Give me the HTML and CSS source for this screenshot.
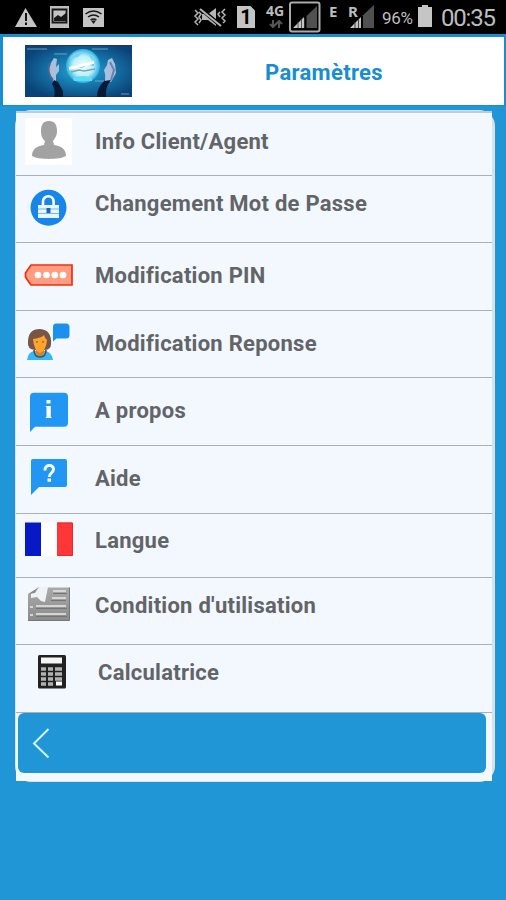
FILE: index.html
```html
<!DOCTYPE html>
<html lang="fr">
<head>
<meta charset="utf-8">
<title>Paramètres</title>
<link rel="stylesheet" href="styles.css">
</head>
<body>
<div class="status">
  <svg class="status-left" width="120" height="34" viewBox="0 0 120 34">
    <path d="M25.500 8L37 27H15z" fill="#c4c4c4"/><path d="M26 13v8M26 22.500v2.500" stroke="#111" stroke-width="2"/>
    <path d="M50 6h19v22H50z" fill="#bdbdbd"/><path d="M52.500 9.500h14v13h-14z" fill="#c4c4c4" stroke="#171717" stroke-width="1.800"/><path d="M54 21v-3l4-3 3 2 5-4v8z" fill="#171717"/>
    <path d="M83 8h21v19H83z" fill="#c4c4c4"/><path d="M85.500 14q8-6 16 0M88 17q5.500-4 11 0M90.500 20q3-2 6 0" fill="none" stroke="#171717" stroke-width="1.500"/><path d="M91 20.500h5L93.500 24z" fill="#171717"/>
  </svg>
  <svg class="mute" width="34" height="34" viewBox="193 0 34 34" fill="none" stroke="#b5b5b5" stroke-width="1.500">
    <path d="M202 14h6l8-6v18l-8-6h-6z" fill="#b5b5b5" stroke="none"/><path d="M201 9l20 17" stroke="#000" stroke-width="4"/><path d="M200 9l21 17" stroke-width="2"/>
    <path d="M195 10l3 3-3 3 3 3-3 3 3 3M199 12l2 2-2 3 2 3-2 3M225 9l-3 3 3 3-3 3 3 3-2 2M220 12l-2 2 2 3"/>
  </svg>
  <div class="sim">1</div>
  <div class="net"><span>4G</span><svg width="14" height="9" viewBox="0 0 14 9"><path d="M4 0v7M1 4l3 3 3-3M10 8V1M7 4l3-3 3 3" fill="none" stroke="#555" stroke-width="2"/></svg></div>
  <svg class="signal" width="32" height="34" viewBox="289 0 32 34"><rect x="290" y="2.500" width="29.500" height="29" rx="2" fill="none" stroke="#aaa" stroke-width="2"/><path d="M294 28l23-22v22z" fill="#505050"/><path d="M293 28l11-11v11z" fill="#c4c4c4"/><path d="M298 22v6M301.500 19v9" stroke="#555"/><path d="M305.500 16v12" stroke="#000" stroke-width="2"/></svg>
  <span class="edge">E</span>
  <span class="roam">R</span>
  <svg class="signal-roam" width="26" height="34" viewBox="349 0 26 34"><path d="M361 17l13-12v23h-13z" fill="#505050"/><path d="M350 28l11-11v11z" fill="#c4c4c4"/><path d="M355 22v6M358.500 19v9" stroke="#444"/><path d="M362 16v12" stroke="#000" stroke-width="2"/></svg>
  <span class="percent">96%</span>
  <svg class="battery" width="16" height="34" viewBox="0 0 16 34"><path d="M1 7h4V5h6v2h4v20H1z" fill="#c5c5c5"/></svg>
  <span class="time">00:35</span>
</div>
<header class="header">
  <svg class="logo" width="107" height="52" viewBox="0 0 107 52">
    <defs>
      <radialGradient id="sky" cx=".53" cy=".5" r=".58"><stop offset="0" stop-color="#29a9dd"/><stop offset=".45" stop-color="#1679ae"/><stop offset="1" stop-color="#0a4377"/></radialGradient>
      <radialGradient id="globe"><stop offset="0" stop-color="#f2ffff"/><stop offset=".6" stop-color="#b8f1fc"/><stop offset="1" stop-color="#29aee0"/></radialGradient>
    </defs>
    <path d="M0 0h107v52H0z" fill="url(#sky)"/><path d="M0 .5h107M0 51.500h107" stroke="#173a72"/>
    <circle cx="58" cy="21" r="17" fill="url(#globe)"/>
    <path d="M44 14q5-9 14-7l-5 5-5 1zM64 9q6 1 8 7l-6-2z" fill="#7bd3ec"/>
    <path d="M45 24l7-3 5 1 6-3 6 1M46 27l8-2 5 1 11-2" fill="none" stroke="#7da3ba" stroke-width="1.300"/>
    <path d="M44 22l25-6v3l-25 6z" fill="#fff"/>
    <path d="M48 33q10-4 19 0v3H49z" fill="#5bdcf4"/>
    <path d="M28 36q-6-8-4-15l5-8 3 1-1 8 3-3v7l-3 4v7z" fill="#a9bfdc"/><path d="M28 35q-7-8-3-17" stroke="#4b6590" stroke-width="2" fill="none"/>
    <path d="M29 35l4 2 5 9v6h-9q2-7-2-13z" fill="#071b38"/>
    <path d="M80 36q1-6-1-11l3-5 1-5 4-2 3 6 1 9-5 9z" fill="#a9bfdc"/><path d="M85 17l4 8-3 10" stroke="#6d81a9" stroke-width="2" fill="none"/>
    <path d="M79 36l7-1q-6 7-5 17h-9q0-9 7-16z" fill="#071b38"/>
    <path d="M2 4h20M29 9h13M67 4h16M70 36h9M96 49h8" stroke="#82b5d1" stroke-width=".8"/>
  </svg>
  <h1 class="title">Paramètres</h1>
</header>
<main class="panel">
  <div class="row r1"><svg class="icon" width="60" height="62" viewBox="16 113 60 62"><path d="M25 117h47v47H25z" fill="#fff"/><path d="M49 120c6 0 8 4 8 10 0 5-2 7-4 10l1 4c7 1 12 4 12 11-7 4-13 2-17 3-4-1-10 1-17-3 0-7 5-10 12-11l1-4c-3-3-4-5-4-10 0-6 2-10 8-10z" fill="#a2a2a2"/></svg><span class="label">Info Client/Agent</span></div>
  <div class="row r2"><svg class="icon" width="60" height="66" viewBox="16 176 60 66"><circle cx="48.500" cy="207.700" r="18" fill="#1686eb"/><path d="M43 205v-3.500a5.300 5.300 0 0 1 10.600 0v3.500" fill="none" stroke="#fff" stroke-width="2.600"/><path d="M38 205h21v13H38z" fill="#eaf6ff"/><path d="M38 209h21M38 213.500h21" stroke="#77b7ed"/><path d="M46.500 208h4v5h-4z" fill="#1669af"/></svg><span class="label">Changement Mot de Passe</span></div>
  <div class="row r3"><svg class="icon" width="60" height="67" viewBox="16 243 60 67"><path d="M31 265h41v20H31q-3-4-5.500-8v-4z" fill="#ff9d80" stroke="#f52d0d" stroke-width="1.700"/><g fill="#fff"><circle cx="38" cy="275" r="3.300"/><circle cx="46.500" cy="275" r="3.300"/><circle cx="54.800" cy="275" r="3.300"/><circle cx="63" cy="275" r="3.300"/></g></svg><span class="label">Modification PIN</span></div>
  <div class="row r4"><svg class="icon" width="60" height="66" viewBox="16 311 60 66"><path d="M27 360q1-8 7-9h12q6 2 7 9z" fill="#39b6f5"/><path d="M35 350q-8-1-7-8 0-13 12-13 12 1 11 15 0 6-7 6z" fill="#795548"/><path d="M36 350v-4h8v4q2 3-4 6-6-3-4-6z" fill="#ed7d09"/><path d="M34 350q0 7 6 7t6-7" fill="none" stroke="#41515b" stroke-width="1.500"/><path d="M33 339q8-1 11-4 1 4 3 5-1 11-7 13-6-2-7-14z" fill="#ffa42c"/><circle cx="37" cy="342" r=".8" fill="#77400e"/><circle cx="43" cy="342" r=".8" fill="#77400e"/><path d="M56 323.500h10q3.500 0 3.500 3.500v8q0 3.500-3.500 3.500h-9.500L53 341.500V327q0-3.500 3-3.500z" fill="#1b91ed"/></svg><span class="label">Modification Reponse</span></div>
  <div class="row r5"><svg class="icon" width="60" height="67" viewBox="16 378 60 67"><path d="M34 392.700h30q4 0 4 4v26q0 4-4 4H35L30 432v-35.300q0-4 4-4z" fill="#2196f3"/><path d="M46.500 400h4v3.500h-4zM46.500 406h4.300v12h-4.300z" fill="#fff"/><path d="M45.800 406.500h4M45.800 417.500h5.700" stroke="#fff"/></svg><span class="label">A propos</span></div>
  <div class="row r6"><svg class="icon" width="60" height="67" viewBox="16 446 60 67"><path d="M33 459h32q2 0 2 2v24q0 2-2 2H39l-8 8v-34q0-2 2-2z" fill="#2196f3"/><path d="M45 470.500c-.5-6.500 8.500-6.500 8.500-1.500 0 4-4.300 4-4.300 8" fill="none" stroke="#fff" stroke-width="2.900"/><path d="M47.500 478.500h3.500v3.200h-3.500z" fill="#fff"/></svg><span class="label">Aide</span></div>
  <div class="row r7"><svg class="icon" width="60" height="63" viewBox="16 514 60 63"><path d="M25 522.500h16V556H25z" fill="#0719c5"/><path d="M41 522.500h16V556H41z" fill="#fff"/><path d="M57 522.500h15.500V556H57z" fill="#fe3637"/><path d="M57 523h15.500v32.500H57" fill="none" stroke="#e52b30"/></svg><span class="label">Langue</span></div>
  <div class="row r8"><svg class="icon" width="60" height="66" viewBox="16 578 60 66"><defs><linearGradient id="paper" x2="0" y2="1"><stop stop-color="#aaa"/><stop offset="1" stop-color="#8b8b8b"/></linearGradient></defs><path d="M38 587.500h31.500v33H28v-26z" fill="url(#paper)"/><path d="M31 594l9-7h8l-3 15-4-1-4-4-6 1z" fill="#eff3f6"/><path d="M28 594l10-6-3 5z" fill="#8d8d8d"/><g fill="none" stroke-width="2" stroke="#d5d5d5"><path d="M53 591h13M52 598h14M36 606h30M36 614h30M30 607h3M30 615h3"/><path d="M53 593.500h14M51 600.500h15M36 608.500h31M36 616.500h31" stroke="#747474" stroke-width="1"/></g><path d="M28 620.500h41.500v-33" fill="none" stroke="#777"/></svg><span class="label">Condition d'utilisation</span></div>
  <div class="row r9"><svg class="icon" width="60" height="67" viewBox="16 645 60 67"><rect x="38" y="655" width="28" height="33.500" rx="1.500" fill="#222"/><path d="M41 657.500h21v6H41z" fill="#f5f5f5"/><path d="M41 669h5M48 669h5M55 669h7M41 674h5M48 674h5M55 674h7M41 679h5M48 679h5M55 679h7M41 684h5M48 684h5" stroke="#b2b2b2" stroke-width="3.400"/><path d="M56 681.500h6v4h-6z" fill="#fff"/></svg><span class="label label-calc">Calculatrice</span></div>
  <button class="back" aria-label="Retour"><svg width="20" height="32" viewBox="0 0 20 32"><path d="M16.500 2L2 16.500 16.500 30.500" fill="none" stroke="#d4f4ff" stroke-width="2"/></svg></button>
</main>
</body>
</html>
```
FILE: styles.css
```css
* { box-sizing: border-box; }
body {
  margin: 0;
  width: 506px;
  height: 900px;
  overflow: hidden;
  background: #2196d6;
  font-family: Roboto, "Liberation Sans", sans-serif;
}
svg { display: block; flex-shrink: 0; }
.status {
  display: flex;
  height: 34px;
  background: #000;
  color: #bdbdbd;
  white-space: nowrap;
}
.mute { margin-left: 73px; }
.sim {
  width: 18px;
  height: 22px;
  margin: 6px 0 0 10px;
  background: #c4c4c4;
  color: #000;
  clip-path: polygon(0 0, 75% 0, 100% 20%, 100% 100%, 0 100%);
  font: bold 20px/22px Roboto, sans-serif;
  text-align: center;
}
.net {
  width: 22px;
  margin: 3px 0 0 11px;
  font: bold 14px/16px "Open Sans", sans-serif;
}
.net svg { margin: 1px 0 0 3px; }
.signal { margin-left: 1px; }
.edge, .roam {
  width: 10px;
  margin: 2px 0 0 8px;
  font: bold 15px/18px "Noto Sans", sans-serif;
}
.roam { margin-left: 9px; }
.signal-roam { margin-left: -9px; }
.percent {
  width: 34px;
  margin: 7px 0 0 7px;
  font-size: 17px;
  line-height: 22px;
  letter-spacing: -.3px;
}
.battery { margin-left: 1px; }
.time {
  margin: 4px 0 0 8px;
  font-size: 24px;
  line-height: 28px;
  letter-spacing: -1.2px;
}
.header {
  display: flex;
  width: 506px;
  height: 72px;
  padding: 9px 0 0 22px;
  background: #fff;
  border: 3px solid #168ed1;
  border-right-width: 2px;
  border-bottom-width: 1px;
}
.logo { margin-top: -1px; }
.title {
  margin: 13px 0 0 133px;
  color: #168ed0;
  font-size: 22px;
  font-weight: 700;
  line-height: 28px;
  letter-spacing: .32px;
}
.panel {
  position: relative;
  width: 476px;
  height: 670px;
  margin: 5px 0 0 16px;
  padding-top: 1px;
  background: #f2f8fe;
  border-top: 2px solid #b9cce1;
}
.panel::before {
  content: "";
  position: absolute;
  z-index: -1;
  inset: -3px -2.500px -1px -1.500px;
  border-radius: 16px;
  background: #d7e2ed;
}
.row {
  display: flex;
  border-bottom: 1px solid #aab0b6;
}
.r1 { height: 62px; }
.r2, .r4, .r8 { height: 67px; }
.r3, .r5, .r6, .r9 { height: 68px; }
.r7 { height: 64px; }
.label {
  margin: 19px 0 0 19px;
  height: 28px;
  color: #626467;
  font-size: 22px;
  font-weight: 700;
  line-height: 28px;
  letter-spacing: .26px;
  white-space: nowrap;
}
.r1 .label { margin-top: 14px; }
.r2 .label, .r8 .label { margin-top: 14px; }
.r7 .label { margin-top: 13px; }
.r9 .label { margin: 14px 0 0 22px; }
.back {
  display: flex;
  align-items: center;
  width: 468px;
  height: 60px;
  margin: 0 0 0 2px;
  padding: 0 0 0 14px;
  border: 0;
  border-radius: 6px;
  background: #2196d6;
}
```
